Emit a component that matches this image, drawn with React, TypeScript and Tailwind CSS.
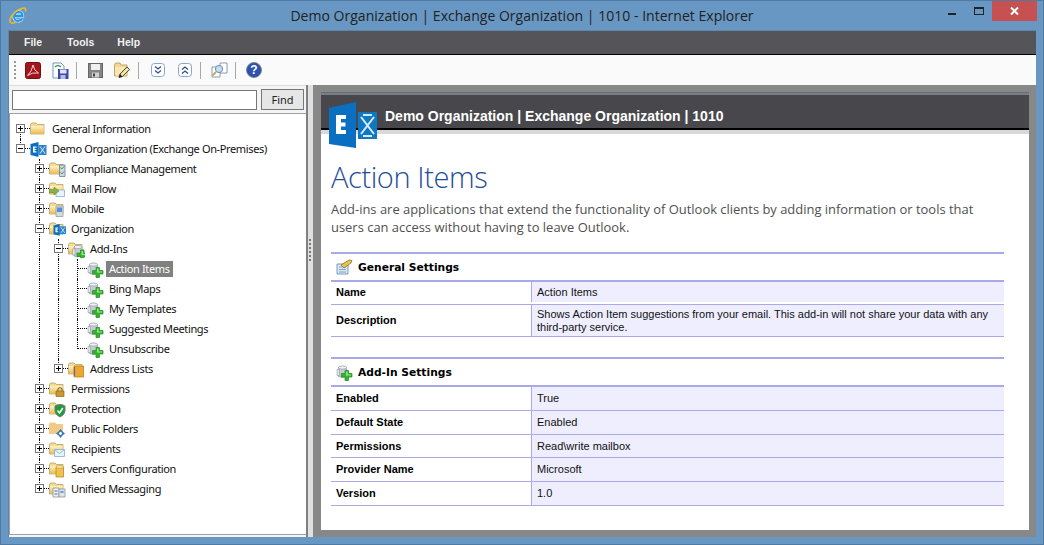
import React from "react";

const Folder = () => (
  <>
    <defs>
      <linearGradient id="folderFill" x1="0" y1="0" x2="0" y2="1">
        <stop offset="0" stopColor="#fdf3c8" />
        <stop offset="1" stopColor="#eebb4f" />
      </linearGradient>
    </defs>
    <path d="M0.5 3.5 L1.5 2 H6 L7.5 3.5 H14 V13 H0.5 Z" fill="#f7dc8c" stroke="#a99659" strokeWidth="0.7" />
    <path d="M1 5 H13.6 V12.6 H1 Z" fill="url(#folderFill)" />
  </>
);

const ExchangeMark = ({ x = 0, y = 0, s = 1 }: { x?: number; y?: number; s?: number }) => (
  <g transform={`translate(${x} ${y}) scale(${s})`}>
    <path d="M8 3 H16 V13 H8 Z" fill="#2a84cc" />
    <path d="M9.5 4.5 L14.5 11.5 M14.5 4.5 L9.5 11.5" stroke="#d8ecfa" strokeWidth="1" />
    <path d="M0 2 L8 0 V15 L0 13 Z" fill="#0a6fc0" />
    <path d="M2.5 4.5 H6 V5.8 H4.1 V6.9 H5.8 V8.1 H4.1 V9.3 H6 V10.5 H2.5 Z" fill="#fff" />
  </g>
);

const AddIn = ({ x = 0, y = 0 }: { x?: number; y?: number }) => (
  <g transform={`translate(${x} ${y})`}>
    <path d="M2 3 Q6 0.5 10 3 V12 Q6 14 2 12 Z" fill="#c6ccd2" stroke="#8c949c" strokeWidth="0.7" />
    <ellipse cx="6" cy="3" rx="4" ry="1.6" fill="#eef1f4" stroke="#8c949c" strokeWidth="0.6" />
    <path d="M0.5 5 H3 V11 H0.5 Z" fill="#e3e6e9" stroke="#868e96" strokeWidth="0.5" />
    <path d="M8.5 6 H12 V9 H15.5 V12.5 H12 V16 H8.5 V12.5 H5 V9 H8.5 Z" fill="#35b52f" stroke="#1d8a1f" strokeWidth="0.7" />
    <path d="M9.5 7 H11 V10 H14.5 V11 H9.5 Z" fill="#9be58f" />
  </g>
);

const TreeIcon = ({ kind }: { kind: string }) => (
  <svg width="17" height="17" viewBox="0 0 17 17" className="shrink-0 ml-[-1px]">
    {kind === "folder" && <Folder />}
    {kind === "exchange" && <ExchangeMark x={0.5} y={1} />}
    {kind === "compliance" && (
      <>
        <Folder />
        <path d="M10.5 4 H16 V15.5 H10.5 Z" fill="#cfd8e6" stroke="#50708f" strokeWidth="0.7" />
        <path d="M11.5 6.5 L12.8 8 L15 5.5 M11.5 11.5 L12.8 13 L15 10.5" fill="none" stroke="#3aa03a" strokeWidth="1" />
      </>
    )}
    {kind === "mail" && (
      <>
        <Folder />
        <path d="M7 9 H15.5 V15.5 H7 Z" fill="#eaf3fb" stroke="#7da4c7" strokeWidth="0.7" />
        <path d="M0.5 8.5 H5 V6 L10 10 L5 14 V11.5 H0.5 Z" fill="#8ab34d" stroke="#5f8a2d" strokeWidth="0.6" />
      </>
    )}
    {kind === "mobile" && (
      <>
        <Folder />
        <path d="M7 5 H14 V15.5 H7 Z" fill="#d7dadd" stroke="#8f959b" strokeWidth="0.7" />
        <path d="M8 6.5 H13 V11 H8 Z" fill="#4f92d8" />
      </>
    )}
    {kind === "org" && (
      <>
        <Folder />
        <ExchangeMark x={4.5} y={3} s={0.78} />
      </>
    )}
    {kind === "addins" && (
      <>
        <Folder />
        <AddIn x={4} y={3} />
      </>
    )}
    {kind === "addin" && <AddIn x={0.5} y={0.5} />}
    {kind === "address" && (
      <>
        <Folder />
        <path d="M6 5 H15.5 V16 H6 Z" fill="#eda92c" stroke="#b57a17" strokeWidth="0.7" />
        <path d="M6.5 6 V15" stroke="#7b5bb0" strokeWidth="1.2" />
      </>
    )}
    {kind === "perm" && (
      <>
        <Folder />
        <path d="M7 10 H15 V15.5 H7 Z" fill="#c9982e" stroke="#8d6a1e" strokeWidth="0.7" />
        <path d="M9 10 V8 Q11 5.5 13 8 V10" fill="none" stroke="#8d6a1e" strokeWidth="1.2" />
      </>
    )}
    {kind === "protect" && (
      <>
        <Folder />
        <path d="M6 5 L11 3.5 L16 5 V10 Q15.5 14 11 16 Q6.5 14 6 10 Z" fill="#1f9d3e" stroke="#6d7a70" strokeWidth="1" />
        <path d="M8.5 9.5 L10.5 12 L13.8 7" fill="none" stroke="#fff" strokeWidth="1.5" />
      </>
    )}
    {kind === "public" && (
      <>
        <path d="M0 3 L1 1.5 H6 L7.5 3 H14 V13 H0 Z" fill="#f3c987" />
        <path d="M11.5 8 L13.5 10.5 L16 12.5 L13.5 14.5 L11.5 17 L9.5 14.5 L7 12.5 L9.5 10.5 Z" fill="#3f78b5" />
        <circle cx="11.5" cy="12.5" r="1.4" fill="#fff" />
      </>
    )}
    {kind === "recipients" && (
      <>
        <Folder />
        <path d="M5.5 8.5 H15.5 V15.5 H5.5 Z" fill="#e9f3fc" stroke="#80abd3" strokeWidth="0.8" />
        <path d="M5.5 8.5 L10.5 12.5 L15.5 8.5" fill="none" stroke="#80abd3" strokeWidth="0.8" />
      </>
    )}
    {kind === "servers" && (
      <>
        <Folder />
        <path d="M7 6 H14.5 V16 H7 Z" fill="#f1c24a" stroke="#a98420" strokeWidth="0.7" />
        <ellipse cx="10.8" cy="6" rx="3.8" ry="1.4" fill="#fbe8a6" stroke="#a98420" strokeWidth="0.5" />
      </>
    )}
    {kind === "unified" && (
      <>
        <Folder />
        <path d="M4 7 H10 V16 H4 Z" fill="#eef0f3" stroke="#7d8794" strokeWidth="0.7" />
        <path d="M10 8 H16 V16 H10 Z" fill="#dfe4ea" stroke="#7d8794" strokeWidth="0.7" />
        <path d="M5.5 10 H8.5 M5.5 13 H8.5" stroke="#4b6f95" strokeWidth="1.2" />
        <path d="M11.5 11 H14.5" stroke="#3d87c7" strokeWidth="1.5" />
      </>
    )}
  </svg>
);

type Node = {
  label: string;
  icon: string;
  depth: number;
  toggle?: "+" | "-";
  guides?: number[];
  last?: boolean;
  selected?: boolean;
};

// guides = indent levels whose vertical dotted line runs through the row
const tree: Node[] = [
  { label: "General Information", icon: "folder", depth: 0, toggle: "+" },
  { label: "Demo Organization (Exchange On-Premises)", icon: "exchange", depth: 0, toggle: "-", last: true },
  { label: "Compliance Management", icon: "compliance", depth: 1, toggle: "+" },
  { label: "Mail Flow", icon: "mail", depth: 1, toggle: "+", guides: [1] },
  { label: "Mobile", icon: "mobile", depth: 1, toggle: "+", guides: [1] },
  { label: "Organization", icon: "org", depth: 1, toggle: "-", guides: [1] },
  { label: "Add-Ins", icon: "addins", depth: 2, toggle: "-", guides: [1] },
  { label: "Action Items", icon: "addin", depth: 3, guides: [1, 2], selected: true },
  { label: "Bing Maps", icon: "addin", depth: 3, guides: [1, 2] },
  { label: "My Templates", icon: "addin", depth: 3, guides: [1, 2] },
  { label: "Suggested Meetings", icon: "addin", depth: 3, guides: [1, 2] },
  { label: "Unsubscribe", icon: "addin", depth: 3, guides: [1, 2], last: true },
  { label: "Address Lists", icon: "address", depth: 2, toggle: "+", guides: [1], last: true },
  { label: "Permissions", icon: "perm", depth: 1, toggle: "+", guides: [1] },
  { label: "Protection", icon: "protect", depth: 1, toggle: "+", guides: [1] },
  { label: "Public Folders", icon: "public", depth: 1, toggle: "+", guides: [1] },
  { label: "Recipients", icon: "recipients", depth: 1, toggle: "+", guides: [1] },
  { label: "Servers Configuration", icon: "servers", depth: 1, toggle: "+", guides: [1] },
  { label: "Unified Messaging", icon: "unified", depth: 1, toggle: "+", guides: [1], last: true },
];

const Toggle = ({ type }: { type: "+" | "-" }) => (
  <span className="absolute left-[4px] top-[5px] w-[9px] h-[9px] border border-[#777] bg-white flex items-center justify-center">
    <span className="relative w-[5px] h-px bg-black">
      {type === "+" && <span className="absolute left-[2px] top-[-2px] w-px h-[5px] bg-black" />}
    </span>
  </span>
);

const TreeRow = ({ node, index }: { node: Node; index: number }) => {
  const levels = Array.from({ length: node.depth + 1 }, (_, i) => i);
  return (
    <div className="flex h-5 items-center">
      {levels.map((lvl) => (
        <div key={lvl} className="relative w-[19px] h-5 shrink-0">
          {node.guides?.includes(lvl) && lvl < node.depth && (
            <span className="absolute left-[8px] top-0 h-5 border-l border-dotted border-black" />
          )}
          {lvl === node.depth && (
            <>
              <span
                className={`absolute left-[8px] border-l border-dotted border-black ${
                  node.last ? "top-0 h-[10px]" : index === 0 ? "top-[10px] h-[10px]" : "top-0 h-5"
                }`}
              />
              <span className="absolute left-[9px] top-[9px] w-[9px] border-t border-dotted border-black" />
              {node.toggle && <Toggle type={node.toggle} />}
            </>
          )}
        </div>
      ))}
      <TreeIcon kind={node.icon} />
      <span
        className={`ml-[2px] px-[3px] h-4 leading-[16px] text-[11px] tracking-[-0.36px] whitespace-nowrap font-['Noto_Sans',sans-serif] ${
          node.selected ? "bg-[#808080] text-white" : "text-[#111]"
        }`}
      >
        {node.label}
      </span>
    </div>
  );
};

const Sep = () => <span className="w-px h-[17px] bg-[#a8a8a8] ml-[7px]" />;

const Toolbar = () => (
  <div className="h-[30px] bg-[#fafafa] flex items-center pl-[5px] shrink-0">
    <span className="h-[18px] w-[2px] border-l-2 border-dotted border-[#999] mr-[9px]" />
    <svg width="16" height="17" viewBox="0 0 16 17">
      <rect x="0.5" y="0.5" width="15" height="16" rx="2" fill="#a5161b" stroke="#6d1013" />
      <path d="M2.5 13.5 Q7 9.5 8 3 Q9 9 13.5 11 Q7 10 2.5 13.5 Z" fill="none" stroke="#f3d3d3" strokeWidth="1" />
    </svg>
    <svg className="ml-[11px]" width="17" height="17" viewBox="0 0 17 17">
      <path d="M1 1 H9 L12 4 V16 H1 Z" fill="#fff" stroke="#5b7ba5" strokeWidth="0.8" />
      <path d="M3 5 Q6 2 9 5" fill="none" stroke="#3aa07a" strokeWidth="1.5" />
      <rect x="6" y="7" width="10.5" height="10" fill="#3c49a8" />
      <rect x="8" y="7.5" width="6.5" height="4" fill="#dfe3f5" />
      <rect x="8.5" y="13" width="5" height="4" fill="#b5bce0" />
    </svg>
    <Sep />
    <svg width="15" height="15" viewBox="0 0 15 15" className="ml-[11px]">
      <rect x="0.5" y="0.5" width="14" height="14" fill="#858585" stroke="#666" />
      <rect x="3" y="1" width="9" height="6" fill="#f0f0f0" />
      <rect x="4" y="9.5" width="7" height="5" fill="#d0d0d0" />
      <rect x="5" y="10.5" width="2" height="3" fill="#444" />
    </svg>
    <svg className="ml-[11px]" width="17" height="17" viewBox="0 0 17 17">
      <path d="M0.5 3 L1.5 1 H6 L7 3 H13 V14 H0.5 Z" fill="#f4d88f" stroke="#a48a4c" strokeWidth="0.7" />
      <path d="M1 5 H12.5 V13.5 H1 Z" fill="#f9e6b0" />
      <path d="M5 15.5 L6 12 L13 5 L15.5 7.5 L8.5 14.5 Z" fill="#f0e2a0" stroke="#333" strokeWidth="0.9" />
      <path d="M5 15.5 L6 12 L8.5 14.5 Z" fill="#222" />
    </svg>
    <Sep />
    <svg className="ml-[12px]" width="14" height="14" viewBox="0 0 14 14">
      <rect x="0.5" y="0.5" width="13" height="13" rx="3" fill="#fff" stroke="#86a7cb" />
      <path d="M4 3.5 L7 6 L10 3.5 M4 7.5 L7 10 L10 7.5" fill="none" stroke="#2d4f8e" strokeWidth="1.3" />
    </svg>
    <svg className="ml-[13px] mr-px" width="14" height="14" viewBox="0 0 14 14">
      <rect x="0.5" y="0.5" width="13" height="13" rx="3" fill="#fff" stroke="#86a7cb" />
      <path d="M4 6.5 L7 4 L10 6.5 M4 10.5 L7 8 L10 10.5" fill="none" stroke="#2d4f8e" strokeWidth="1.3" />
    </svg>
    <Sep />
    <svg className="ml-[10px]" width="17" height="16" viewBox="0 0 17 16">
      <path d="M1 5 H9 V15 H1 Z" fill="#fff" stroke="#6a84a8" strokeWidth="0.8" />
      <path d="M9 1 H16 V11 H9 Z" fill="#fff" stroke="#6a84a8" strokeWidth="0.8" />
      <circle cx="8" cy="7" r="3.6" fill="#bfe0f5" stroke="#7a8a98" strokeWidth="1" />
      <path d="M5 10 L1.5 13.5" stroke="#c7a657" strokeWidth="1.8" />
    </svg>
    <Sep />
    <svg className="ml-[10px]" width="16" height="16" viewBox="0 0 16 16">
      <circle cx="8" cy="8" r="7.5" fill="#2b4fa8" stroke="#7d8796" />
      <circle cx="8" cy="8" r="6" fill="#2f52b0" />
      <text x="8" y="12.2" textAnchor="middle" fontSize="12" fontWeight="700" fill="#fff" fontFamily="Liberation Sans">?</text>
    </svg>
  </div>
);

const Row = ({ label, value, h }: { label: string; value: React.ReactNode; h: string }) => (
  <div className={`flex border-b border-[#a9a9e8] ${h}`}>
    <div className="w-[201px] shrink-0 pl-[5px] flex items-center font-bold text-black border-r border-[#a9a9e8]">{label}</div>
    <div className="flex-1 bg-[#eeeeff] pl-[5px] pr-2 flex items-center text-[#111] leading-[13px]">{value}</div>
  </div>
);

const SectionHead = ({ icon, title }: { icon: React.ReactNode; title: string }) => (
  <div className="h-[30px] border-y-2 border-[#a9a9e8] flex items-center pl-[5px] gap-[5px]">
    {icon}
    <span className="pt-[2px] font-['DejaVu_Sans',sans-serif] font-bold text-[10.7px] text-black">{title}</span>
  </div>
);

export default function App() {
  return (
    <div className="w-[1044px] h-[545px] bg-[#6897c3] border border-[#4f7aa3] flex flex-col overflow-hidden">
      {/* title bar */}
      <div className="h-[29px] shrink-0 relative flex items-center justify-center">
        <svg className="absolute left-[8px] top-[6px]" width="18" height="17" viewBox="0 0 20 19">
          <path d="M5.5 10 H15 C15 5.5 11 4.5 8.5 6 C5.5 8 4.5 12 7 14.5 C9.5 16.5 13 15.5 14.5 13" fill="none" stroke="#e4f4fd" strokeWidth="3.6" />
          <path d="M5.5 10 H15 C15 5.5 11 4.5 8.5 6 C5.5 8 4.5 12 7 14.5 C9.5 16.5 13 15.5 14.5 13" fill="none" stroke="#1f97ea" strokeWidth="2.4" />
          <path d="M1.5 17 C-0.5 14 4 5 15 1.5 C18 0.5 19.5 2 18 5" fill="none" stroke="#f5b81f" strokeWidth="1.8" />
          <path d="M1.5 17 C3 18.5 6 18 8 16.5" fill="none" stroke="#f5b81f" strokeWidth="1.5" />
        </svg>
        <span className="text-[14.05px] text-[#222] font-['Open_Sans',sans-serif]">
          Demo Organization | Exchange Organization | 1010 - Internet Explorer
        </span>
        <span className="absolute left-[947px] top-[12px] w-2 h-[2px] bg-[#222]" />
        <span className="absolute left-[973px] top-[6px] w-[10px] h-[8px] border border-t-2 border-[#222]" />
        <span className="absolute left-[991px] top-0 w-[45px] h-5 bg-[#c75050] flex items-center justify-center">
          <svg width="9" height="8" viewBox="0 0 9 8">
            <path d="M1 0.5 L8 7.5 M8 0.5 L1 7.5" stroke="#fff" strokeWidth="2" />
          </svg>
        </span>
      </div>

      <div className="mx-[7px] flex-1 border border-[#5f86ab] border-r-0 border-b-0 flex flex-col min-h-0">
        {/* menu */}
        <div className="h-[24px] shrink-0 bg-[#545459] border-b-[1px] border-black flex items-center font-['Liberation_Sans',sans-serif] font-bold text-[10.5px] text-[#f2f2f2]">
          <span className="ml-[15px]">File</span>
          <span className="ml-[25px]">Tools</span>
          <span className="ml-[23px]">Help</span>
        </div>
        <Toolbar />

        <div className="flex-1 flex bg-[#888888] min-h-0">
          {/* left pane */}
          <div className="w-[297px] shrink-0 bg-[#f4f4f4] border-t border-[#ddd] flex flex-col">
            <div className="h-[27px] shrink-0 flex items-center pl-[3px] gap-[4px]">
              <div className="w-[245px] h-[20px] bg-white border border-[#777]" />
              <button className="w-[43px] h-[21px] bg-[#e6e6e6] border border-[#777] text-[11px] text-[#222] font-['Noto_Sans',sans-serif] leading-none">
                Find
              </button>
            </div>
            <div className="flex-1 bg-white border-l border-t border-b border-[#a0a0a8] mb-[2px] pt-[5px] pl-[2px]">
              {tree.map((n, i) => (
                <TreeRow key={n.label} node={n} index={i} />
              ))}
            </div>
          </div>
          {/* splitter */}
          <div className="w-[2px] shrink-0 bg-[#7f7f8a]" />
          <div className="w-[5px] shrink-0 bg-[#e0e0e0] flex items-center justify-center">
            <span className="h-[22px] w-[3px] border-l-2 border-dotted border-[#777] mb-[122px]" />
          </div>

          {/* right pane */}
          <div className="flex-1 pt-[7px] pl-[8px] pr-[7px] pb-[7px] flex min-w-0">
            <div className="flex-1 flex flex-col bg-white relative">
              <div className="h-px bg-[#5f7187]" />
              <div className="h-[2px] bg-[#7d7d80]" />
              <div className="h-[35px] shrink-0 bg-[#48484c] border-b-2 border-black flex items-center pl-[64px] pt-[10px]">
                <span className="text-white font-bold text-[14px] font-['Liberation_Sans',sans-serif]">
                  Demo Organization | Exchange Organization | 1010
                </span>
              </div>
              <div className="h-[4px] shrink-0 bg-[#d8d8d8]" />
              <svg className="absolute left-[8px] top-[10px]" width="48" height="46" viewBox="0 0 48 46">
                <path d="M29 10 H48 V37 H29 Z" fill="#0f78c4" />
                <path d="M32 15 L38.5 23.5 L32 32 M45 15 L38.5 23.5 L45 32 M34 13 H43 M34 34 H43" stroke="#d6ebfa" strokeWidth="2" fill="none" />
                <path d="M0 6 L27 0 V46 L0 42 Z" fill="#0a6fc0" />
                <path d="M7 13 H17 V17 H12 V20.5 H16.5 V24.5 H12 V28 H17 V32 H7 Z" fill="#fff" />
              </svg>

              <div className="px-[10px] flex-1 flex flex-col">
                <h1 className="mt-[25px] text-[29px] tracking-[-0.4px] leading-[36px] font-light text-[#1f4d9c] font-['Open_Sans',sans-serif]">
                  Action Items
                </h1>
                <p className="mt-[5px] text-[12.95px] leading-[18px] text-[#505050] font-['Open_Sans',sans-serif] w-[670px]">
                  Add-ins are applications that extend the functionality of Outlook clients by adding information or tools that users can access without having to leave Outlook.
                </p>

                <div className="mt-[16px] w-[673px] font-['Liberation_Sans',sans-serif] text-[11px]">
                  <SectionHead
                    title="General Settings"
                    icon={
                      <svg width="17" height="16" viewBox="0 0 17 16">
                        <path d="M1 5 H12 V15 H1 Z" fill="#dbe8f5" stroke="#5f83a8" strokeWidth="0.8" />
                        <path d="M3 8 H10 M3 10.5 H10 M3 13 H10" stroke="#6f8fb0" strokeWidth="0.8" />
                        <path d="M5 6 L13 1 L16 1.5 L15 4 L8 9 Z" fill="#e8c24e" stroke="#7c6a22" strokeWidth="0.7" />
                      </svg>
                    }
                  />
                  <Row label="Name" value="Action Items" h="h-[23px] pb-[2px]" />
                  <Row
                    label="Description"
                    value="Shows Action Item suggestions from your email. This add-in will not share your data with any third-party service."
                    h="h-[32px]"
                  />
                  <div className="h-[20px]" />
                  <SectionHead
                    title="Add-In Settings"
                    icon={
                      <svg width="17" height="17" viewBox="0 0 17 17">
                        <AddIn x={0.5} y={0.5} />
                      </svg>
                    }
                  />
                  <Row label="Enabled" value="True" h="h-[24px]" />
                  <Row label="Default State" value="Enabled" h="h-[24px]" />
                  <Row label="Permissions" value="Read\write mailbox" h="h-[23px]" />
                  <Row label="Provider Name" value="Microsoft" h="h-[24px]" />
                  <Row label="Version" value="1.0" h="h-[24px]" />
                </div>
              </div>
            </div>
          </div>
        </div>
      </div>
      <div className="h-[7px] shrink-0" />
    </div>
  );
}
